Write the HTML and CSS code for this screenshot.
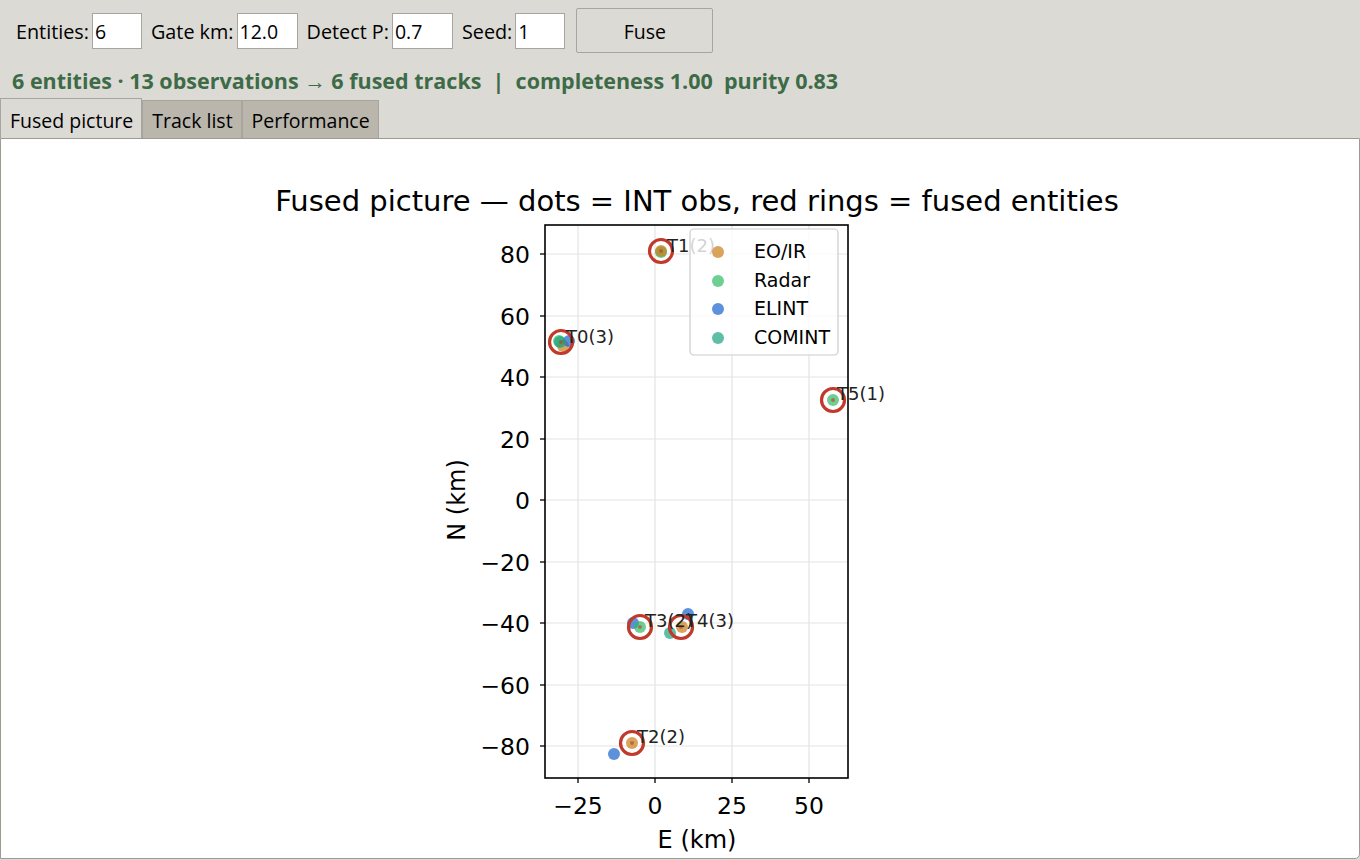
FILE: index.html
```html
<!DOCTYPE html>
<html>
<head>
<meta charset="utf-8">
<link rel="stylesheet" href="styles.css">
</head>
<body>
<div class="toolbar">
  <label class="lbl">Entities:</label><input class="field w50" value="6">
  <label class="lbl">Gate km:</label><input class="field w61" value="12.0">
  <label class="lbl">Detect P:</label><input class="field w61" value="0.7">
  <label class="lbl">Seed:</label><input class="field w50" value="1">
  <button class="fuse">Fuse</button>
</div>
<div class="status">6 entities · 13 observations → 6 fused tracks &nbsp;|&nbsp; completeness 1.00 &nbsp;purity 0.83</div>
<div class="tabs">
  <div class="tab active">Fused picture</div>
  <div class="tab">Track list</div>
  <div class="tab">Performance</div>
</div>
<div class="panel">
  <svg class="chart" width="1358" height="719" viewBox="0 0 1358 719">
    <g transform="translate(-1,-139)">
      <text class="title" x="697" y="211" text-anchor="middle">Fused picture — dots = INT obs, red rings = fused entities</text>
      <g class="grid">
        <line x1="578" y1="225" x2="578" y2="778"/>
        <line x1="655" y1="225" x2="655" y2="778"/>
        <line x1="732" y1="225" x2="732" y2="778"/>
        <line x1="809" y1="225" x2="809" y2="778"/>
        <line x1="545" y1="254" x2="848" y2="254"/>
        <line x1="545" y1="316" x2="848" y2="316"/>
        <line x1="545" y1="377" x2="848" y2="377"/>
        <line x1="545" y1="439" x2="848" y2="439"/>
        <line x1="545" y1="500" x2="848" y2="500"/>
        <line x1="545" y1="562" x2="848" y2="562"/>
        <line x1="545" y1="623" x2="848" y2="623"/>
        <line x1="545" y1="685" x2="848" y2="685"/>
        <line x1="545" y1="746" x2="848" y2="746"/>
      </g>
      <g class="ticks">
        <line x1="540" y1="254" x2="545" y2="254"/>
        <line x1="540" y1="316" x2="545" y2="316"/>
        <line x1="540" y1="377" x2="545" y2="377"/>
        <line x1="540" y1="439" x2="545" y2="439"/>
        <line x1="540" y1="500" x2="545" y2="500"/>
        <line x1="540" y1="562" x2="545" y2="562"/>
        <line x1="540" y1="623" x2="545" y2="623"/>
        <line x1="540" y1="685" x2="545" y2="685"/>
        <line x1="540" y1="746" x2="545" y2="746"/>
        <line x1="578" y1="778" x2="578" y2="783"/>
        <line x1="655" y1="778" x2="655" y2="783"/>
        <line x1="732" y1="778" x2="732" y2="783"/>
        <line x1="809" y1="778" x2="809" y2="783"/>
      </g>
      <g class="ylab" text-anchor="end">
        <text x="530" y="262.5">80</text>
        <text x="530" y="324.5">60</text>
        <text x="530" y="385.5">40</text>
        <text x="530" y="447.5">20</text>
        <text x="530" y="508.5">0</text>
        <text x="530" y="570.5">−20</text>
        <text x="530" y="631.5">−40</text>
        <text x="530" y="693.5">−60</text>
        <text x="530" y="754.5">−80</text>
      </g>
      <g class="xlab" text-anchor="middle">
        <text x="578" y="814">−25</text>
        <text x="655" y="814">0</text>
        <text x="732" y="814">25</text>
        <text x="809" y="814">50</text>
      </g>
      <text class="axlabel" x="697" y="848" text-anchor="middle">E (km)</text>
      <text class="axlabel" transform="translate(465,500) rotate(-90)" text-anchor="middle">N (km)</text>

      <g class="dots">
        <circle class="radar" cx="559" cy="341" r="6"/>
        <circle class="eoir" cx="563" cy="346" r="6"/>
        <circle class="elint" cx="569" cy="341" r="6"/>
        <circle class="comint" cx="560" cy="342" r="6"/>

        <circle class="radar" cx="661" cy="252" r="6"/>
        <circle class="eoir" cx="661" cy="251" r="6"/>

        <circle class="radar" cx="833" cy="400" r="6"/>

        <circle class="elint" cx="633" cy="623" r="6"/>
        <circle class="radar" cx="640" cy="627" r="6"/>

        <circle class="elint" cx="688" cy="614" r="6"/>
        <circle class="comint" cx="670" cy="633" r="6"/>
        <circle class="eoir" cx="682" cy="627" r="6"/>

        <circle class="eoir" cx="632" cy="743" r="6"/>
        <circle class="elint" cx="614" cy="754" r="6"/>
      </g>
      <g class="rings">
        <circle cx="561" cy="342" r="11.5"/>
        <circle cx="661" cy="251" r="11.5"/>
        <circle cx="833" cy="400" r="11.5"/>
        <circle cx="640" cy="627" r="11.5"/>
        <circle cx="681" cy="627" r="11.5"/>
        <circle cx="632" cy="743" r="11.5"/>
      </g>
      <g class="centers">
        <circle cx="561" cy="342" r="2"/>
        <circle cx="661" cy="251" r="2"/>
        <circle cx="833" cy="400" r="2"/>
        <circle cx="640" cy="627" r="2"/>
        <circle cx="681" cy="627" r="2"/>
        <circle cx="632" cy="743" r="2"/>
      </g>
      <g class="ann">
        <text x="566" y="343">T0(3)</text>
        <text x="667" y="252">T1(2)</text>
        <text x="837" y="400">T5(1)</text>
        <text x="645" y="627">T3(2)</text>
        <text x="686" y="627">T4(3)</text>
        <text x="637" y="743">T2(2)</text>
      </g>
      <rect class="frame" x="545" y="225" width="303" height="553"/>
      <g class="legend">
        <rect class="lgbox" x="690" y="229" width="148" height="126" rx="4"/>
        <circle class="eoir" cx="718" cy="252" r="6"/>
        <circle class="radar" cx="718" cy="281" r="6"/>
        <circle class="elint" cx="718" cy="309" r="6"/>
        <circle class="comint" cx="718" cy="338" r="6"/>
        <text x="754" y="258">EO/IR</text>
        <text x="754" y="287">Radar</text>
        <text x="754" y="315">ELINT</text>
        <text x="754" y="344">COMINT</text>
      </g>
    </g>
  </svg>
</div>
</body>
</html>
```
FILE: styles.css
```css
html, body {
  margin: 0;
  padding: 0;
}
body {
  background: #dcdad5;
  width: 1360px;
  height: 860px;
  overflow: hidden;
  font-family: "Open Sans", "Noto Sans", sans-serif;
  color: #000;
}
.toolbar {
  display: flex;
  align-items: center;
  height: 45px;
  padding: 8px 0 0 16px;
  box-sizing: content-box;
}
.lbl {
  font-size: 19.8px;
  margin-right: 3px;
  padding-top: 2px;
}
.field {
  height: 36px;
  box-sizing: border-box;
  border: 1px solid #a8a59e;
  background: #fff;
  font-family: inherit;
  font-size: 19.5px;
  padding: 2px 2px 0;
  margin: 0 9px 0 0;
  outline: none;
}
.w50 { width: 50px; }
.w61 { width: 61px; }
.fuse {
  margin-left: 2px;
  width: 137px;
  height: 45px;
  background: #dcdad5;
  border: 1px solid #a8a59e;
  border-radius: 2px;
  font-family: inherit;
  font-size: 19.5px;
  color: #000;
  padding-top: 2px;
}
.status {
  height: 45px;
  box-sizing: border-box;
  padding: 14px 0 0 12px;
  font-size: 21.5px;
  font-weight: 700;
  color: #3d6b47;
  white-space: pre;
  line-height: 28px;
}
.tabs {
  display: flex;
  align-items: flex-end;
  height: 40px;
}
.tab {
  height: 38px;
  box-sizing: border-box;
  padding: 0 8px 0 9px;
  font-size: 19.5px;
  line-height: 40px;
  background: #bab6ac;
  border: 1px solid #a8a59e;
  border-bottom: none;
}
.tab.active {
  height: 40px;
  line-height: 44px;
  background: #dcdad5;
}
.panel {
  height: 721px;
  box-sizing: border-box;
  border: 1px solid #9f9b93;
  border-bottom-right-radius: 5px;
  background: #fff;
}
.chart {
  display: block;
  font-family: "DejaVu Sans", sans-serif;
}
.title { font-size: 29px; fill: #000; }
.grid line { stroke: #e3e3e3; stroke-width: 1.2; }
.ticks line { stroke: #000; stroke-width: 1.3; }
.ylab text, .xlab text { font-size: 23.5px; fill: #000; }
.axlabel { font-size: 24px; fill: #000; }
.frame { fill: none; stroke: #000; stroke-width: 1.6; }
.eoir { fill: #c97f18; fill-opacity: 0.7; }
.radar { fill: #31ba65; fill-opacity: 0.7; }
.elint { fill: #1a62cc; fill-opacity: 0.7; }
.comint { fill: #1aa480; fill-opacity: 0.7; }
.rings circle { fill: none; stroke: #c0392b; stroke-width: 3.2; }
.centers circle { fill: #c0392b; fill-opacity: 0.6; }
.ann text { font-size: 18px; fill: #222; }
.lgbox { fill: #fff; fill-opacity: 0.8; stroke: #cccccc; stroke-width: 1.2; }
.legend text { font-size: 19px; fill: #000; }
```
